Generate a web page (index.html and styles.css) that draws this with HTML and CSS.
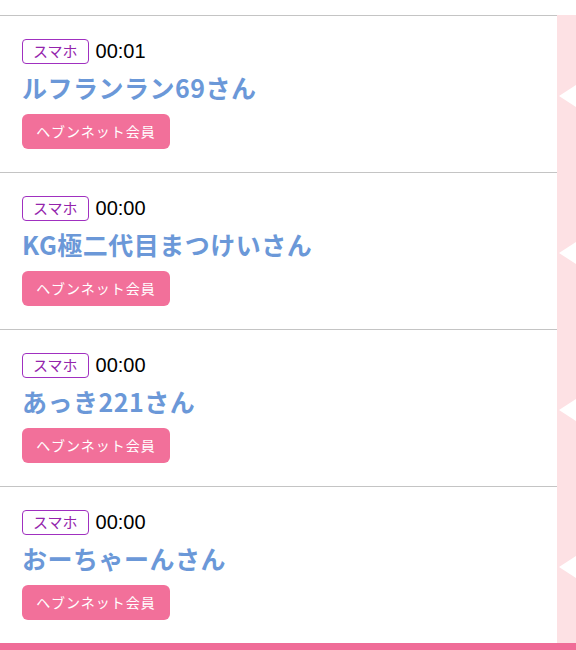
FILE: index.html
```html
<!DOCTYPE html>
<html lang="ja">
<head>
  <meta charset="UTF-8" />
  <meta name="viewport" content="width=device-width, initial-scale=1.0"/>
  <title>アクセス履歴</title>
  <link rel="stylesheet" href="styles.css">
</head>
<body>
  <div class="history">
    <div class="entry">
      <div class="entry-body">
        <div class="meta">
          <span class="device">スマホ</span>
          <span class="time">00:01</span>
        </div>
        <div class="name">ルフランラン69さん</div>
        <div class="member">ヘブンネット会員</div>
      </div>
      <div class="side"><span class="arrow"></span></div>
    </div>

    <div class="entry">
      <div class="entry-body">
        <div class="meta">
          <span class="device">スマホ</span>
          <span class="time">00:00</span>
        </div>
        <div class="name">KG極二代目まつけいさん</div>
        <div class="member">ヘブンネット会員</div>
      </div>
      <div class="side"><span class="arrow"></span></div>
    </div>

    <div class="entry">
      <div class="entry-body">
        <div class="meta">
          <span class="device">スマホ</span>
          <span class="time">00:00</span>
        </div>
        <div class="name">あっき221さん</div>
        <div class="member">ヘブンネット会員</div>
      </div>
      <div class="side"><span class="arrow"></span></div>
    </div>

    <div class="entry">
      <div class="entry-body">
        <div class="meta">
          <span class="device">スマホ</span>
          <span class="time">00:00</span>
        </div>
        <div class="name">おーちゃーんさん</div>
        <div class="member">ヘブンネット会員</div>
      </div>
      <div class="side"><span class="arrow"></span></div>
    </div>
  </div>
  <div class="footer-bar"></div>
</body>
</html>
```

FILE: styles.css
```css
body {
  margin: 0;
  padding-top: 15px;
  background: #fff;
  font-family: "Noto Sans CJK JP", "Noto Sans", sans-serif;
  color: #000;
}

.history {
  display: flex;
  flex-direction: column;
}

.entry {
  display: flex;
  height: 157px;
}

.entry-body {
  flex: 1;
  border-top: 1px solid #c4c4c4;
  padding: 23px 22px 0;
}

.side {
  width: 19px;
  background: #fde1e4;
  display: flex;
  align-items: center;
  justify-content: flex-end;
  padding-top: 4px;
  box-sizing: border-box;
}

.arrow {
  width: 0;
  height: 0;
  border-top: 11px solid transparent;
  border-bottom: 11px solid transparent;
  border-right: 17px solid #fff;
}

.meta {
  display: flex;
  align-items: center;
  height: 25px;
}

.device {
  box-sizing: border-box;
  height: 25px;
  line-height: 22px;
  padding: 0 10px;
  border: 1.5px solid #a030c0;
  border-radius: 4px;
  color: #9424ac;
  font-size: 15px;
}

.time {
  margin-left: 7px;
  font-family: "Liberation Sans", sans-serif;
  font-size: 20px;
  line-height: 25px;
}

.name {
  margin-top: 6px;
  height: 34px;
  line-height: 34px;
  font-size: 25px;
  font-weight: bold;
  letter-spacing: 0.5px;
  color: #6b98d8;
  white-space: nowrap;
}

.member {
  margin-top: 10px;
  width: 148px;
  height: 35px;
  line-height: 35px;
  text-align: center;
  background: #f2709a;
  color: #fff;
  border-radius: 6px;
  font-size: 14px;
  letter-spacing: 1px;
}

.footer-bar {
  height: 10px;
  background: #f06d98;
}
```
